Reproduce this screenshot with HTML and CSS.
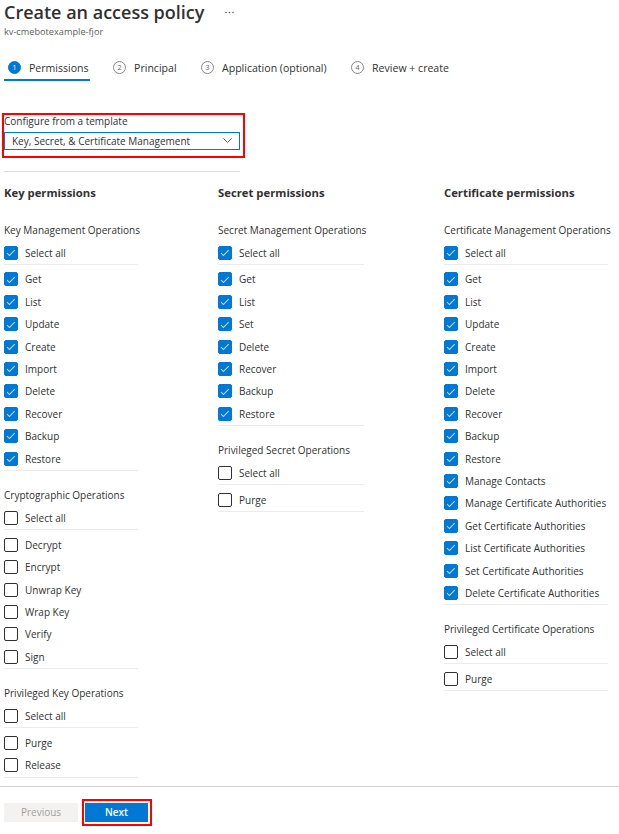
FILE: index.html
```html
<!DOCTYPE html>
<html lang="en">
<head>
<meta charset="utf-8">
<title>Create an access policy</title>
<link rel="stylesheet" href="styles.css">
</head>
<body>
<div class="page">
  <main class="main">
    <header class="header">
      <div class="title-row">
        <h1 class="title">Create an access policy</h1>
        <svg class="more" width="9" height="3" viewBox="0 0 9 3"><circle cx="1" cy="1.5" r="0.8"/><circle cx="4.5" cy="1.5" r="0.8"/><circle cx="8" cy="1.5" r="0.8"/></svg>
      </div>
      <div class="subtitle">kv-cmebotexample-fjor</div>
    </header>

    <nav class="tabs">
      <div class="tab active"><span class="step">1</span><span>Permissions</span></div>
      <div class="tab"><span class="step">2</span><span>Principal</span></div>
      <div class="tab"><span class="step">3</span><span>Application (optional)</span></div>
      <div class="tab"><span class="step">4</span><span>Review + create</span></div>
    </nav>

    <div class="template highlight">
      <div class="field-label">Configure from a template</div>
      <div class="dropdown">
        <span>Key, Secret, &amp; Certificate Management</span>
        <svg width="9" height="5" viewBox="0 0 9 5"><path d="M0.5 0.5 L4.5 4.5 L8.5 0.5" fill="none" stroke="#605e5c" stroke-width="1"/></svg>
      </div>
    </div>

    <div class="divider"></div>

    <div class="columns">
      <section class="col">
        <h2 class="col-title">Key permissions</h2>
        <div class="group">
          <div class="group-label">Key Management Operations</div>
          <div class="row select-all"><span class="cb on"></span>Select all</div>
          <div class="list">
            <div class="row"><span class="cb on"></span>Get</div>
            <div class="row"><span class="cb on"></span>List</div>
            <div class="row"><span class="cb on"></span>Update</div>
            <div class="row"><span class="cb on"></span>Create</div>
            <div class="row"><span class="cb on"></span>Import</div>
            <div class="row"><span class="cb on"></span>Delete</div>
            <div class="row"><span class="cb on"></span>Recover</div>
            <div class="row"><span class="cb on"></span>Backup</div>
            <div class="row"><span class="cb on"></span>Restore</div>
          </div>
        </div>
        <div class="group">
          <div class="group-label">Cryptographic Operations</div>
          <div class="row select-all"><span class="cb"></span>Select all</div>
          <div class="list">
            <div class="row"><span class="cb"></span>Decrypt</div>
            <div class="row"><span class="cb"></span>Encrypt</div>
            <div class="row"><span class="cb"></span>Unwrap Key</div>
            <div class="row"><span class="cb"></span>Wrap Key</div>
            <div class="row"><span class="cb"></span>Verify</div>
            <div class="row"><span class="cb"></span>Sign</div>
          </div>
        </div>
        <div class="group">
          <div class="group-label">Privileged Key Operations</div>
          <div class="row select-all"><span class="cb"></span>Select all</div>
          <div class="list">
            <div class="row"><span class="cb"></span>Purge</div>
            <div class="row"><span class="cb"></span>Release</div>
          </div>
        </div>
      </section>

      <section class="col">
        <h2 class="col-title">Secret permissions</h2>
        <div class="group">
          <div class="group-label">Secret Management Operations</div>
          <div class="row select-all"><span class="cb on"></span>Select all</div>
          <div class="list">
            <div class="row"><span class="cb on"></span>Get</div>
            <div class="row"><span class="cb on"></span>List</div>
            <div class="row"><span class="cb on"></span>Set</div>
            <div class="row"><span class="cb on"></span>Delete</div>
            <div class="row"><span class="cb on"></span>Recover</div>
            <div class="row"><span class="cb on"></span>Backup</div>
            <div class="row"><span class="cb on"></span>Restore</div>
          </div>
        </div>
        <div class="group">
          <div class="group-label">Privileged Secret Operations</div>
          <div class="row select-all"><span class="cb"></span>Select all</div>
          <div class="list">
            <div class="row"><span class="cb"></span>Purge</div>
          </div>
        </div>
      </section>

      <section class="col">
        <h2 class="col-title">Certificate permissions</h2>
        <div class="group">
          <div class="group-label">Certificate Management Operations</div>
          <div class="row select-all"><span class="cb on"></span>Select all</div>
          <div class="list">
            <div class="row"><span class="cb on"></span>Get</div>
            <div class="row"><span class="cb on"></span>List</div>
            <div class="row"><span class="cb on"></span>Update</div>
            <div class="row"><span class="cb on"></span>Create</div>
            <div class="row"><span class="cb on"></span>Import</div>
            <div class="row"><span class="cb on"></span>Delete</div>
            <div class="row"><span class="cb on"></span>Recover</div>
            <div class="row"><span class="cb on"></span>Backup</div>
            <div class="row"><span class="cb on"></span>Restore</div>
            <div class="row"><span class="cb on"></span>Manage Contacts</div>
            <div class="row"><span class="cb on"></span>Manage Certificate Authorities</div>
            <div class="row"><span class="cb on"></span>Get Certificate Authorities</div>
            <div class="row"><span class="cb on"></span>List Certificate Authorities</div>
            <div class="row"><span class="cb on"></span>Set Certificate Authorities</div>
            <div class="row"><span class="cb on"></span>Delete Certificate Authorities</div>
          </div>
        </div>
        <div class="group">
          <div class="group-label">Privileged Certificate Operations</div>
          <div class="row select-all"><span class="cb"></span>Select all</div>
          <div class="list">
            <div class="row"><span class="cb"></span>Purge</div>
          </div>
        </div>
      </section>
    </div>
  </main>

  <footer class="footer">
    <button class="btn btn-prev" type="button">Previous</button>
    <div class="next-wrap highlight">
      <button class="btn btn-next" type="button">Next</button>
    </div>
  </footer>
</div>
</body>
</html>
```

FILE: styles.css
```css
* {
  box-sizing: border-box;
}

html,
body {
  margin: 0;
  height: 100%;
}

body {
  font-family: "Open Sans", "Noto Sans", sans-serif;
  font-size: 10px;
  color: #323130;
  background: #ffffff;
}

.page {
  height: 100vh;
  display: flex;
  flex-direction: column;
}

.main {
  flex: 1;
  padding: 0 4px;
}

/* Header */
.title-row {
  display: flex;
  align-items: center;
}

.title {
  margin: 0;
  font-size: 18px;
  font-weight: 600;
  line-height: 24.5px;
  color: #323130;
}

.more {
  margin-left: 21px;
  fill: #605e5c;
}

.subtitle {
  margin-top: 0.5px;
  font-size: 9.2px;
  line-height: 14px;
  color: #605e5c;
}

/* Tabs */
.tabs {
  display: flex;
  gap: 19.5px;
  margin-top: 20.5px;
}

.tab {
  display: flex;
  align-items: center;
  gap: 8px;
  padding: 0 1px 3px 4px;
  border-bottom: 2px solid transparent;
  font-size: 10.55px;
  line-height: 16px;
}

.tab.active {
  border-bottom-color: #0078d4;
}

.step {
  width: 13px;
  height: 13px;
  border-radius: 50%;
  border: 1px solid #8a8886;
  font-size: 7px;
  line-height: 11px;
  text-align: center;
  color: #605e5c;
}

.tab.active .step {
  background: #0078d4;
  border-color: #0078d4;
  color: #ffffff;
}

/* Annotation highlight */
.highlight {
  border: 2px solid #ff0000;
}

/* Template picker */
.template {
  width: 243px;
  margin: 32px 0 0 -2px;
  padding: 0 3px 6px 0;
}

.field-label {
  line-height: 12px;
}

.dropdown {
  margin-top: 5px;
  height: 18px;
  border: 1px solid #0078d4;
  display: flex;
  align-items: center;
  justify-content: space-between;
  padding: 0 7px;
  line-height: 16px;
}

.divider {
  width: 236px;
  height: 1px;
  background: #e1dfdd;
  margin-top: 13.5px;
}

/* Permission columns */
.columns {
  display: grid;
  grid-template-columns: 134px 146px 164px;
  column-gap: 80px;
  align-items: start;
  margin-top: 13px;
}

.col-title {
  margin: 0;
  font-size: 11.3px;
  font-weight: 700;
  line-height: 16px;
}

.group {
  margin-top: 16px;
}

.col-title + .group {
  margin-top: 20.5px;
}

.group-label {
  line-height: 16px;
  white-space: nowrap;
}

.row {
  display: flex;
  align-items: center;
  gap: 7px;
  height: 22.4px;
  line-height: 16px;
  white-space: nowrap;
}

.select-all {
  height: 23px;
  margin-top: 4px;
  border-bottom: 1px solid #edebe9;
}

.list {
  padding-top: 3.8px;
  border-bottom: 1px solid #edebe9;
}

.cb {
  flex: none;
  width: 14px;
  height: 14px;
  border: 1px solid #323130;
  border-radius: 2px;
  display: flex;
  align-items: center;
  justify-content: center;
}

.cb.on {
  background: #0078d4;
  border-color: #0078d4;
}

.cb.on::after {
  content: "";
  width: 3px;
  height: 6.5px;
  border: solid rgba(255, 255, 255, 0.75);
  border-width: 0 1px 1px 0;
  transform: rotate(45deg);
  margin-top: -2px;
}

/* Footer */
.footer {
  border-top: 1px solid #d2d0ce;
  padding: 12px 4px 8px;
  display: flex;
  align-items: center;
  gap: 4px;
}

.btn {
  height: 19px;
  border: 0;
  padding: 0;
  margin: 0;
  font-family: inherit;
  font-size: 10px;
  line-height: 19px;
  text-align: center;
}

.btn-prev {
  width: 74px;
  background: #f3f2f1;
  color: #a19f9d;
}

.next-wrap {
  display: flex;
  padding: 2px 2px 2px 1px;
}

.btn-next {
  width: 63px;
  background: #0078d4;
  color: #ffffff;
  font-weight: 600;
}
```
